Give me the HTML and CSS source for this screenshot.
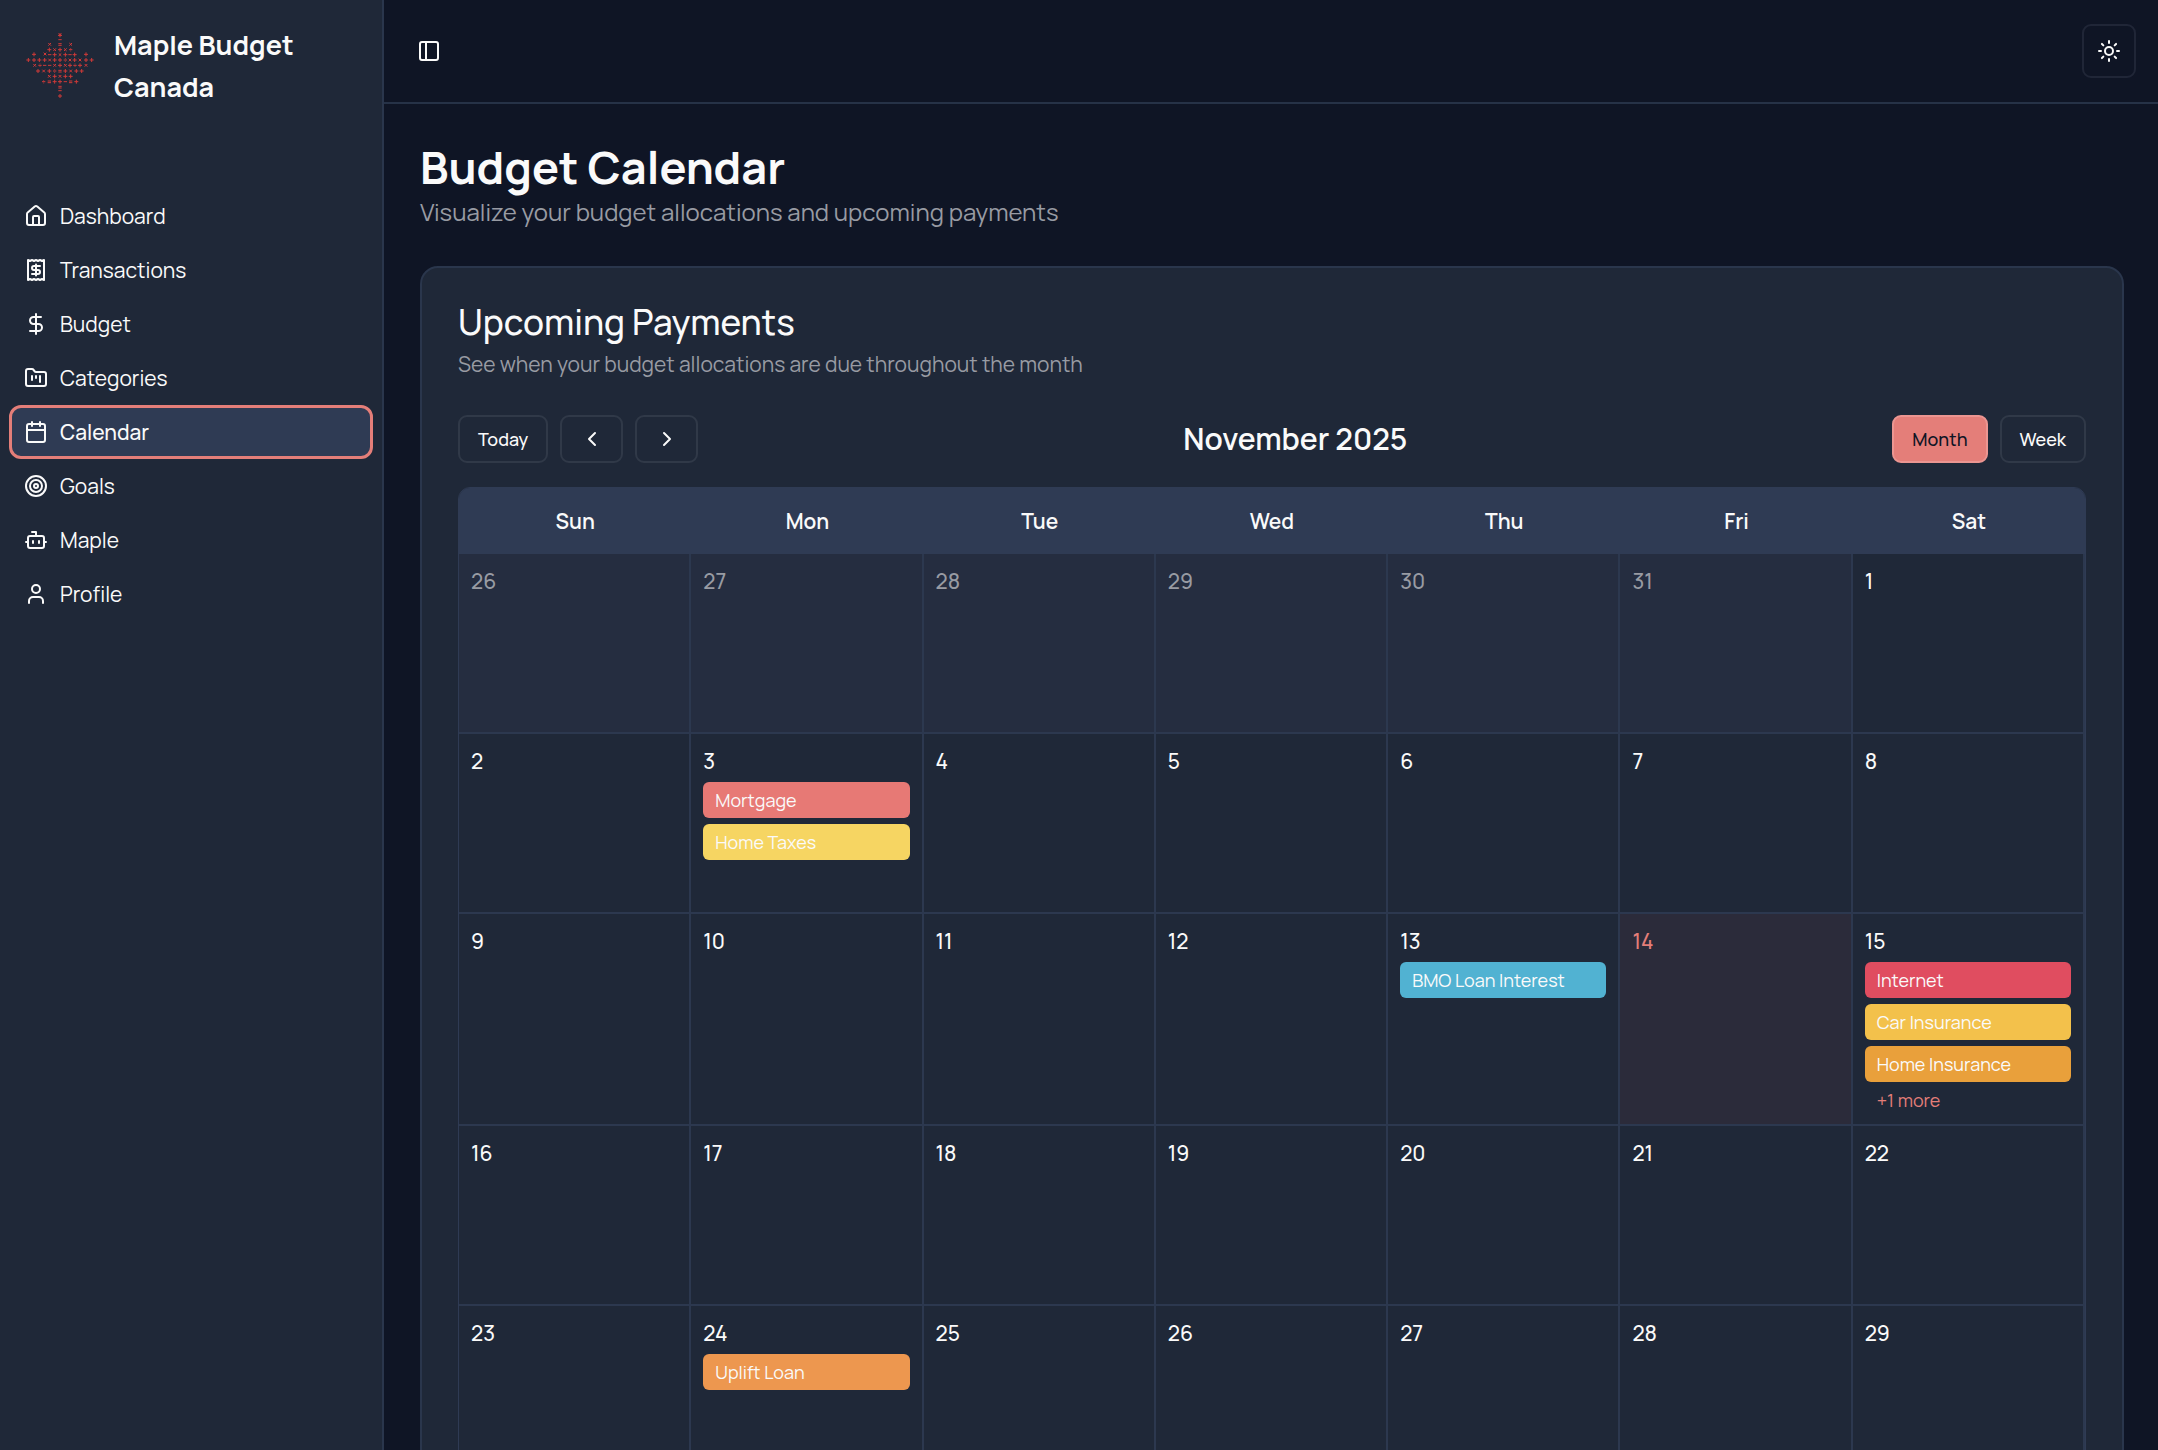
FILE: index.html
```html
<!DOCTYPE html>
<html lang="en">
<head>
  <meta charset="UTF-8" />
  <meta name="viewport" content="width=device-width, initial-scale=1.0" />
  <title>Maple Budget Canada</title>
  <link rel="stylesheet" href="styles.css">
</head>
<body>
  <div class="app">
    <aside class="sidebar">
      <div class="brand">
        <!-- maple leaf built from math symbols -->
        <svg class="logo" viewBox="72 92 216 216" aria-hidden="true">
          <defs>
            <path id="p" d="M-6 0H6M0 -6V6" />
            <path id="x" d="M-4 -4L4 4M4 -4L-4 4" />
            <path id="m" d="M-5 0H5" />
            <path id="e" d="M-5 -2H5M-5 3H5" />
            <path id="d" d="M-5 0H5M0 -5V-3M0 3V5" />
          </defs>
          <use href="#p" x="180" y="108" /><use href="#x" x="180" y="106" /><use href="#m" x="180" y="121" />
          <use href="#x" x="149" y="135" /><use href="#e" x="180" y="135" /><use href="#x" x="212" y="135" />
          <use href="#p" x="148" y="151" /><use href="#x" x="164" y="151" /><use href="#p" x="180" y="151" /><use href="#x" x="196" y="151" /><use href="#d" x="212" y="151" />
          <use href="#p" x="102" y="165" /><use href="#x" x="135" y="164" /><use href="#m" x="149" y="166" /><use href="#p" x="164" y="166" /><use href="#x" x="180" y="166" /><use href="#p" x="196" y="166" /><use href="#m" x="210" y="166" /><use href="#p" x="224" y="166" /><use href="#p" x="258" y="165" />
          <use href="#p" x="85" y="182" /><use href="#p" x="102" y="182" /><use href="#p" x="118" y="182" /><use href="#p" x="134" y="182" /><use href="#x" x="149" y="182" /><use href="#p" x="164" y="182" /><use href="#p" x="180" y="182" /><use href="#d" x="196" y="182" /><use href="#x" x="210" y="182" /><use href="#p" x="224" y="182" /><use href="#x" x="240" y="182" /><use href="#p" x="258" y="182" /><use href="#p" x="275" y="182" />
          <use href="#x" x="104" y="198" /><use href="#d" x="120" y="198" /><use href="#m" x="134" y="198" /><use href="#m" x="149" y="198" /><use href="#x" x="164" y="198" /><use href="#p" x="180" y="198" /><use href="#x" x="196" y="198" /><use href="#p" x="210" y="198" /><use href="#d" x="225" y="198" /><use href="#p" x="240" y="198" /><use href="#x" x="258" y="198" />
          <use href="#p" x="114" y="215" /><use href="#x" x="131" y="215" /><use href="#p" x="148" y="215" /><use href="#d" x="164" y="215" /><use href="#e" x="180" y="215" /><use href="#p" x="196" y="215" /><use href="#x" x="212" y="215" /><use href="#p" x="229" y="215" /><use href="#p" x="245" y="215" />
          <use href="#x" x="148" y="231" /><use href="#p" x="164" y="231" /><use href="#x" x="180" y="231" /><use href="#p" x="196" y="231" /><use href="#p" x="212" y="231" />
          <use href="#d" x="131" y="247" /><use href="#e" x="148" y="247" /><use href="#p" x="164" y="247" /><use href="#p" x="180" y="247" /><use href="#m" x="196" y="247" /><use href="#e" x="212" y="247" /><use href="#p" x="229" y="247" />
          <use href="#e" x="180" y="263" /><use href="#m" x="180" y="274" /><use href="#p" x="180" y="290" />
        </svg>
        <span class="brand-name">Maple Budget Canada</span>
      </div>

      <nav class="nav">
        <a href="#dashboard">
          <svg class="icon" viewBox="0 0 24 24"><path d="M15 21v-8a1 1 0 0 0-1-1h-4a1 1 0 0 0-1 1v8" /><path d="M3 10a2 2 0 0 1 .709-1.528l7-5.999a2 2 0 0 1 2.582 0l7 5.999A2 2 0 0 1 21 10v9a2 2 0 0 1-2 2H5a2 2 0 0 1-2-2z" /></svg>
          Dashboard
        </a>
        <a href="#transactions">
          <svg class="icon" viewBox="0 0 24 24"><path d="M4 2v20l2-1 2 1 2-1 2 1 2-1 2 1 2-1 2 1V2l-2 1-2-1-2 1-2-1-2 1-2-1-2 1Z" /><path d="M16 8h-6a2 2 0 1 0 0 4h4a2 2 0 1 1 0 4H8" /><path d="M12 17.5v-11" /></svg>
          Transactions
        </a>
        <a href="#budget">
          <svg class="icon" viewBox="0 0 24 24"><path d="M12 2v20" /><path d="M17 5H9.500a3.500 3.500 0 0 0 0 7h5a3.500 3.500 0 0 1 0 7H6" /></svg>
          Budget
        </a>
        <a href="#categories">
          <svg class="icon" viewBox="0 0 24 24"><path d="M4 20h16a2 2 0 0 0 2-2V8a2 2 0 0 0-2-2h-7.930a2 2 0 0 1-1.660-.9l-.820-1.200A2 2 0 0 0 7.930 3H4a2 2 0 0 0-2 2v13c0 1.100.9 2 2 2Z" /><path d="M8 10v4" /><path d="M12 10v2" /><path d="M16 10v6" /></svg>
          Categories
        </a>
        <a href="#calendar" class="active" aria-current="page">
          <svg class="icon" viewBox="0 0 24 24"><path d="M8 2v4" /><path d="M16 2v4" /><rect width="18" height="18" x="3" y="4" rx="2" /><path d="M3 10h18" /></svg>
          Calendar
        </a>
        <a href="#goals">
          <svg class="icon" viewBox="0 0 24 24"><circle cx="12" cy="12" r="10" /><circle cx="12" cy="12" r="6" /><circle cx="12" cy="12" r="2" /></svg>
          Goals
        </a>
        <a href="#maple">
          <svg class="icon" viewBox="0 0 24 24"><path d="M12 8V4H8" /><rect width="16" height="12" x="4" y="8" rx="2" /><path d="M2 14h2" /><path d="M20 14h2" /><path d="M15 13v2" /><path d="M9 13v2" /></svg>
          Maple
        </a>
        <a href="#profile">
          <svg class="icon" viewBox="0 0 24 24"><path d="M19 21v-2a4 4 0 0 0-4-4H9a4 4 0 0 0-4 4v2" /><circle cx="12" cy="7" r="4" /></svg>
          Profile
        </a>
      </nav>
    </aside>

    <div class="page">
      <header class="topbar">
        <button type="button" class="ghost-btn" aria-label="Toggle sidebar">
          <svg class="icon" viewBox="0 0 24 24"><rect width="18" height="18" x="3" y="3" rx="2" /><path d="M9 3v18" /></svg>
        </button>
        <button type="button" class="btn theme-btn" aria-label="Toggle theme">
          <svg class="icon" viewBox="0 0 24 24"><circle cx="12" cy="12" r="4" /><path d="M12 2v2" /><path d="M12 20v2" /><path d="m4.930 4.930 1.410 1.410" /><path d="m17.660 17.660 1.410 1.410" /><path d="M2 12h2" /><path d="M20 12h2" /><path d="m6.340 17.660-1.410 1.410" /><path d="m19.070 4.930-1.410 1.410" /></svg>
        </button>
      </header>

      <main class="content">
        <h1>Budget Calendar</h1>
        <p class="subtitle">Visualize your budget allocations and upcoming payments</p>

        <section class="card">
          <h2>Upcoming Payments</h2>
          <p class="card-desc">See when your budget allocations are due throughout the month</p>

          <div class="toolbar">
            <div class="btn-group">
              <button type="button" class="btn">Today</button>
              <button type="button" class="btn arrow-btn" aria-label="Previous">
                <svg class="icon" viewBox="0 0 24 24"><path d="m15 18-6-6 6-6" /></svg>
              </button>
              <button type="button" class="btn arrow-btn" aria-label="Next">
                <svg class="icon" viewBox="0 0 24 24"><path d="m9 18 6-6-6-6" /></svg>
              </button>
            </div>
            <h3>November 2025</h3>
            <div class="btn-group">
              <button type="button" class="btn primary">Month</button>
              <button type="button" class="btn">Week</button>
            </div>
          </div>

          <div class="calendar">
            <table>
              <thead>
                <tr><th>Sun</th><th>Mon</th><th>Tue</th><th>Wed</th><th>Thu</th><th>Fri</th><th>Sat</th></tr>
              </thead>
              <tbody>
                <tr>
                  <td class="outside">26</td>
                  <td class="outside">27</td>
                  <td class="outside">28</td>
                  <td class="outside">29</td>
                  <td class="outside">30</td>
                  <td class="outside">31</td>
                  <td>1</td>
                </tr>
                <tr>
                  <td>2</td>
                  <td>3
                    <div class="event coral">Mortgage</div>
                    <div class="event yellow">Home Taxes</div>
                  </td>
                  <td>4</td>
                  <td>5</td>
                  <td>6</td>
                  <td>7</td>
                  <td>8</td>
                </tr>
                <tr>
                  <td>9</td>
                  <td>10</td>
                  <td>11</td>
                  <td>12</td>
                  <td>13
                    <div class="event blue">BMO Loan Interest</div>
                  </td>
                  <td class="today">14</td>
                  <td>15
                    <div class="event red">Internet</div>
                    <div class="event gold">Car Insurance</div>
                    <div class="event amber">Home Insurance</div>
                    <a href="#more" class="more">+1 more</a>
                  </td>
                </tr>
                <tr>
                  <td>16</td>
                  <td>17</td>
                  <td>18</td>
                  <td>19</td>
                  <td>20</td>
                  <td>21</td>
                  <td>22</td>
                </tr>
                <tr>
                  <td>23</td>
                  <td>24
                    <div class="event orange">Uplift Loan</div>
                  </td>
                  <td>25</td>
                  <td>26</td>
                  <td>27</td>
                  <td>28</td>
                  <td>29</td>
                </tr>
              </tbody>
            </table>
          </div>
        </section>
      </main>
    </div>
  </div>
</body>
</html>
```
FILE: styles.css
```css
*, *::before, *::after {
  box-sizing: border-box;
}

body {
  margin: 0;
  background: #0f1525;
  color: #fafafa;
  font-family: Manrope, Inter, sans-serif;
  font-size: 21px;
}

h1, h2, h3, p {
  margin: 0;
}

button {
  font-family: inherit;
  color: inherit;
  cursor: pointer;
}

.app {
  display: flex;
  height: 100vh;
  overflow: hidden;
}

.icon {
  width: 24px;
  height: 24px;
  flex-shrink: 0;
  fill: none;
  stroke: currentColor;
  stroke-width: 2;
  stroke-linecap: round;
  stroke-linejoin: round;
}

/* sidebar */
.sidebar {
  width: 384px;
  flex-shrink: 0;
  background: #1f2838;
  border-right: 2px solid #2a364c;
}

.brand {
  display: flex;
  align-items: center;
  gap: 18px;
  height: 132px;
  padding: 0 24px;
}

.logo {
  width: 72px;
  height: 72px;
  flex-shrink: 0;
  fill: none;
  stroke: #d03a38;
  stroke-width: 3;
}

.brand-name {
  font-size: 27px;
  font-weight: 700;
  line-height: 42px;
}

.nav {
  display: flex;
  flex-direction: column;
  padding: 57px 9px 0;
}

.nav a {
  display: flex;
  align-items: center;
  gap: 12px;
  height: 54px;
  padding: 0 12px;
  border: 3px solid transparent;
  border-radius: 12px;
  color: #fafafa;
  font-size: 21px;
  font-weight: 400;
  text-decoration: none;
}

.nav a.active {
  background: #2f3b54;
  border-color: #e47e79;
  font-weight: 500;
}

/* top bar */
.page {
  flex: 1;
  min-width: 0;
}

.topbar {
  display: flex;
  align-items: center;
  justify-content: space-between;
  height: 104px;
  padding: 0 22px 0 21px;
  border-bottom: 2px solid #263247;
}

.ghost-btn {
  display: flex;
  padding: 12px;
  border: none;
  background: none;
}

.btn {
  display: flex;
  align-items: center;
  justify-content: center;
  height: 48px;
  padding: 0 18px;
  border: 2px solid #303948;
  border-radius: 9px;
  background: none;
  font-size: 18px;
  font-weight: 500;
}

.theme-btn {
  width: 54px;
  height: 54px;
  padding: 0;
  border-color: #202637;
}

/* content */
.content {
  padding: 36px 34px 36px 36px;
}

h1 {
  font-size: 45px;
  font-weight: 700;
  line-height: 54px;
}

.subtitle {
  color: #989ba3;
  font-size: 24px;
  font-weight: 400;
  line-height: 36px;
}

.card {
  margin-top: 36px;
  padding: 36px;
  border: 2px solid #2a364c;
  border-radius: 18px;
  background: #1f2838;
}

h2 {
  font-size: 35px;
  font-weight: 500;
  line-height: 36px;
}

.card-desc {
  margin-top: 9px;
  color: #989ba3;
  font-size: 21px;
  font-weight: 400;
  line-height: 30px;
}

.toolbar {
  display: flex;
  align-items: center;
  justify-content: space-between;
  margin-top: 36px;
}

.btn-group {
  display: flex;
  gap: 12px;
}

.arrow-btn {
  width: 63px;
}

.btn.primary {
  border-color: #eb9591;
  background: #e47e79;
  color: #0f1525;
}

h3 {
  font-size: 30px;
  font-weight: 600;
  line-height: 42px;
}

/* calendar */
.calendar {
  margin-top: 24px;
  border: 1px solid #2f3b54;
  border-radius: 12px;
  overflow: hidden;
}

table {
  width: 100%;
  table-layout: fixed;
  border-collapse: separate;
  border-spacing: 0;
}

th {
  height: 66px;
  padding: 0;
  background: #2f3b54;
  font-size: 21px;
  font-weight: 600;
}

td {
  height: 180px;
  padding: 12px;
  border-right: 2px solid #2c384f;
  border-bottom: 2px solid #2c384f;
  font-size: 21px;
  font-weight: 500;
  line-height: 30px;
  vertical-align: top;
}

td.outside {
  background: #252d40;
  color: #989ba3;
}

td.today {
  background: #2b2b3a;
  color: #e47e79;
}

.event {
  height: 36px;
  margin-top: 6px;
  padding: 0 12px;
  border-radius: 6px;
  color: #fafafa;
  font-size: 18px;
  font-weight: 400;
  line-height: 36px;
}

.coral { background: #e77975; }
.yellow { background: #f6d562; }
.blue { background: #51b2d2; }
.red { background: #e04d60; }
.gold { background: #f3c14b; }
.amber { background: #e9a03b; }
.orange { background: #ed974f; }

.more {
  display: block;
  margin-top: 6px;
  padding: 0 12px;
  color: #e47e79;
  font-size: 18px;
  font-weight: 400;
  line-height: 24px;
  text-decoration: none;
}
```
